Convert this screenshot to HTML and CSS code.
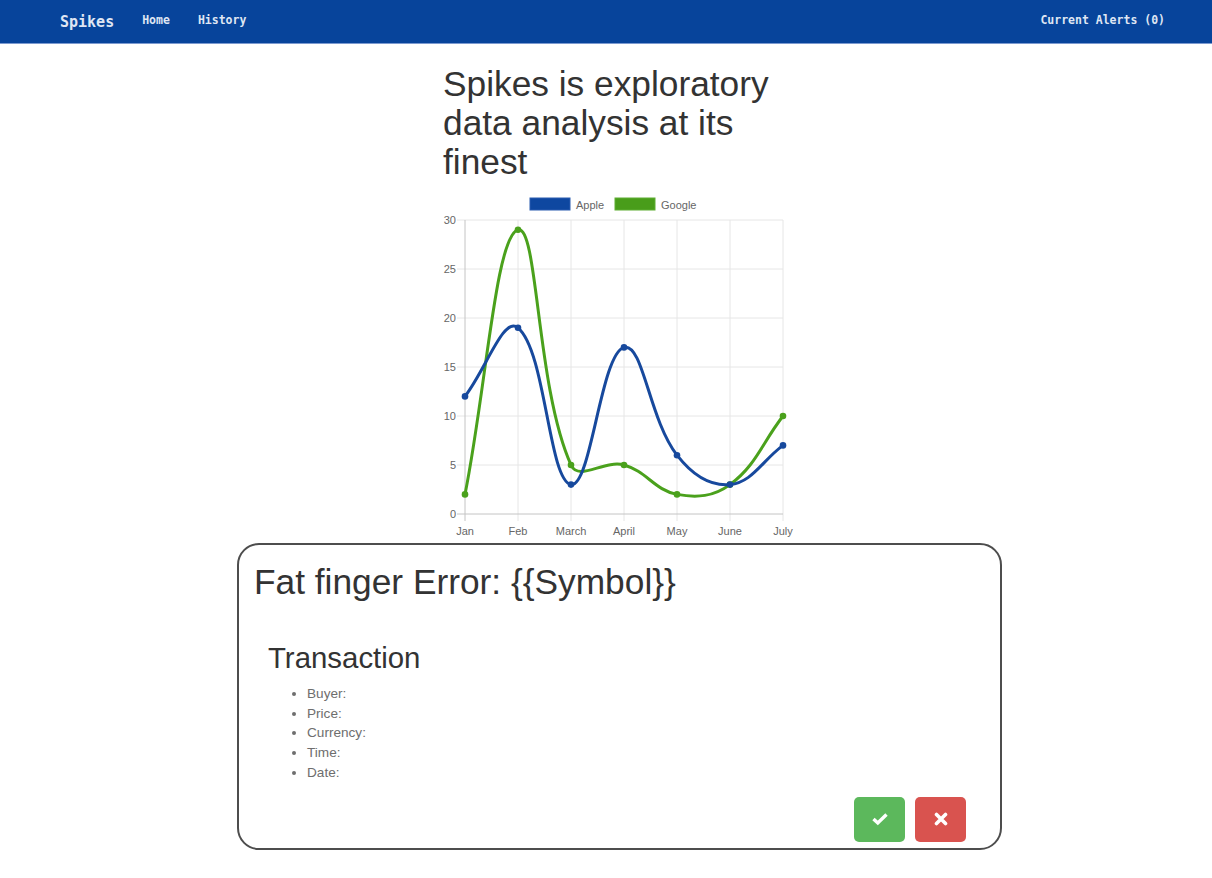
FILE: index.html
```html
<!DOCTYPE html>
<html lang="en">
<head>
<meta charset="utf-8">
<title>Spikes</title>
<link rel="stylesheet" href="styles.css">
</head>
<body>
<nav class="navbar">
  <div class="nav-left">
    <a class="brand" href="#">Spikes</a>
    <a class="nav-link" href="#">Home</a>
    <a class="nav-link" href="#">History</a>
  </div>
  <a class="nav-link" href="#">Current Alerts (0)</a>
</nav>

<main class="page">
  <section class="intro">
    <h1 class="headline">Spikes is exploratory data analysis at its finest</h1>
    <svg class="chart" id="chart" width="360" height="345" viewBox="435 192 360 345" xmlns="http://www.w3.org/2000/svg">
      <g class="legend">
        <rect x="530" y="198" width="40" height="12" fill="#0e47a0" stroke="#2a5cb0" stroke-width="1"/>
        <text x="576" y="209">Apple</text>
        <rect x="615" y="198" width="40" height="12" fill="#499d1a" stroke="#5fae33" stroke-width="1"/>
        <text x="661" y="209">Google</text>
      </g>
      <g class="grid">
        <line x1="457" y1="220" x2="783" y2="220"/>
        <line x1="457" y1="269" x2="783" y2="269"/>
        <line x1="457" y1="318" x2="783" y2="318"/>
        <line x1="457" y1="367" x2="783" y2="367"/>
        <line x1="457" y1="416" x2="783" y2="416"/>
        <line x1="457" y1="465" x2="783" y2="465"/>
        <line x1="518" y1="220" x2="518" y2="521"/>
        <line x1="571" y1="220" x2="571" y2="521"/>
        <line x1="624" y1="220" x2="624" y2="521"/>
        <line x1="677" y1="220" x2="677" y2="521"/>
        <line x1="730" y1="220" x2="730" y2="521"/>
        <line x1="783" y1="220" x2="783" y2="521"/>
      </g>
      <g class="axis">
        <line x1="457" y1="514" x2="783" y2="514"/>
        <line x1="465" y1="220" x2="465" y2="521"/>
      </g>
      <g class="ylabels">
        <text x="456" y="224">30</text>
        <text x="456" y="273">25</text>
        <text x="456" y="322">20</text>
        <text x="456" y="371">15</text>
        <text x="456" y="420">10</text>
        <text x="456" y="469">5</text>
        <text x="456" y="518">0</text>
      </g>
      <g class="xlabels">
        <text x="465" y="535">Jan</text>
        <text x="518" y="535">Feb</text>
        <text x="571" y="535">March</text>
        <text x="624" y="535">April</text>
        <text x="677" y="535">May</text>
        <text x="730" y="535">June</text>
        <text x="783" y="535">July</text>
      </g>
      <g id="series"></g>
    </svg>
  </section>

  <section class="alert-card">
    <h1 class="alert-title">Fat finger Error: {{Symbol}}</h1>
    <div class="transaction">
      <h2 class="transaction-title">Transaction</h2>
      <ul class="details">
        <li>Buyer:</li>
        <li>Price:</li>
        <li>Currency:</li>
        <li>Time:</li>
        <li>Date:</li>
      </ul>
    </div>
    <div class="actions">
      <button class="btn btn-ok" type="button" aria-label="Accept">
        <svg width="18" height="14" viewBox="0 0 18 14"><polyline points="2.5,7 6.8,11 15.5,2.5" fill="none" stroke="#fff" stroke-width="3.4" stroke-linejoin="miter"/></svg>
      </button>
      <button class="btn btn-cancel" type="button" aria-label="Reject">
        <svg width="14" height="14" viewBox="0 0 14 14"><path d="M2.5 2.5 L11.5 11.5 M11.5 2.5 L2.5 11.5" fill="none" stroke="#fff" stroke-width="3.6" stroke-linecap="round"/></svg>
      </button>
    </div>
  </section>
</main>
<script src="script.js"></script>
</body>
</html>
```

FILE: styles.css
```css
* { box-sizing: border-box; }

html, body {
  margin: 0;
  padding: 0;
  background: #ffffff;
}

body {
  font-family: "Liberation Sans", Arial, sans-serif;
  color: #333333;
}

.navbar {
  height: 44px;
  background: #07449b;
  border-bottom: 1px solid #7c9ad0;
  display: flex;
  align-items: center;
  justify-content: space-between;
  padding: 0 47px 0 60px;
}

.nav-left {
  display: flex;
  align-items: center;
  gap: 28px;
}

.navbar a {
  text-decoration: none;
  color: #dfe6f3;
  font-family: "DejaVu Sans Mono", "Liberation Mono", monospace;
  font-weight: bold;
}

.brand {
  font-size: 15px;
  margin-top: 1px;
}

.nav-link {
  font-size: 11.5px;
  margin-top: -3px;
}

.page {
  display: flex;
  flex-direction: column;
}

.intro {
  margin-left: 435px;
  width: 360px;
}

.headline {
  font-size: 35.3px;
  font-weight: 500;
  line-height: 39px;
  margin: 20px 0 11px;
  padding-left: 8px;
  color: #333333;
}

.chart {
  display: block;
}

.chart text {
  font-family: "Liberation Sans", Arial, sans-serif;
  font-size: 11px;
  fill: #666666;
}

.ylabels text { text-anchor: end; }
.xlabels text { text-anchor: middle; }

.grid line {
  stroke: #e6e6e6;
  stroke-width: 1;
}

.axis line {
  stroke: #c4c4c4;
  stroke-width: 1;
}

.alert-card {
  margin-left: 237px;
  margin-top: 6px;
  width: 765px;
  border: 2px solid #4d4d4d;
  border-radius: 22px;
  padding: 0 15px 6px;
}

.alert-title {
  font-size: 35.3px;
  font-weight: 500;
  line-height: 39px;
  margin: 17px 0 5px;
  color: #333333;
}

.transaction {
  padding: 15px 14px 0;
}

.transaction-title {
  font-size: 29.4px;
  font-weight: 500;
  line-height: 33px;
  margin: 20px 0 10px;
  color: #333333;
}

.details {
  margin: 0;
  padding-left: 39px;
  font-size: 13.6px;
  line-height: 19.7px;
  color: #6e6e6e;
}

.actions {
  display: flex;
  justify-content: flex-end;
  gap: 10px;
  padding-right: 19px;
  margin-top: 14px;
}

.btn {
  width: 51px;
  height: 45px;
  border: none;
  border-radius: 5px;
  display: flex;
  align-items: center;
  justify-content: center;
  padding: 0;
}

.btn-ok { background: #5cb85c; }
.btn-cancel { background: #d9534f; }
```

FILE: script.js
```js
(function () {
  var NS = "http://www.w3.org/2000/svg";
  var X0 = 465, DX = 53, Y0 = 514, SY = 9.8;
  var TOP = 220, BOTTOM = 514, LEFT = 465, RIGHT = 783;
  var datasets = [
    { data: [2, 29, 5, 5, 2, 3, 10], color: "#4aa11c" },
    { data: [12, 19, 3, 17, 6, 3, 7], color: "#17499d" }
  ];
  var group = document.getElementById("series");

  function clamp(v, a, b) { return Math.max(a, Math.min(b, v)); }

  datasets.forEach(function (ds) {
    var pts = ds.data.map(function (v, i) { return { x: X0 + DX * i, y: Y0 - v * SY }; });
    var t = 0.4;
    var cps = pts.map(function (cur, i) {
      var prev = pts[Math.max(0, i - 1)];
      var next = pts[Math.min(pts.length - 1, i + 1)];
      var d01 = Math.hypot(cur.x - prev.x, cur.y - prev.y);
      var d12 = Math.hypot(next.x - cur.x, next.y - cur.y);
      var s01 = d01 / (d01 + d12), s12 = d12 / (d01 + d12);
      if (isNaN(s01)) s01 = 0;
      if (isNaN(s12)) s12 = 0;
      var fa = t * s01, fb = t * s12;
      return {
        px: clamp(cur.x - fa * (next.x - prev.x), LEFT, RIGHT),
        py: clamp(cur.y - fa * (next.y - prev.y), TOP, BOTTOM),
        nx: clamp(cur.x + fb * (next.x - prev.x), LEFT, RIGHT),
        ny: clamp(cur.y + fb * (next.y - prev.y), TOP, BOTTOM)
      };
    });
    var d = "M" + pts[0].x + " " + pts[0].y;
    for (var i = 1; i < pts.length; i++) {
      d += " C" + cps[i - 1].nx.toFixed(2) + " " + cps[i - 1].ny.toFixed(2) + " " +
        cps[i].px.toFixed(2) + " " + cps[i].py.toFixed(2) + " " + pts[i].x + " " + pts[i].y;
    }
    var path = document.createElementNS(NS, "path");
    path.setAttribute("d", d);
    path.setAttribute("fill", "none");
    path.setAttribute("stroke", ds.color);
    path.setAttribute("stroke-width", "3");
    group.appendChild(path);
    pts.forEach(function (p) {
      var c = document.createElementNS(NS, "circle");
      c.setAttribute("cx", p.x);
      c.setAttribute("cy", p.y);
      c.setAttribute("r", "3.3");
      c.setAttribute("fill", ds.color);
      group.appendChild(c);
    });
  });
})();
```
